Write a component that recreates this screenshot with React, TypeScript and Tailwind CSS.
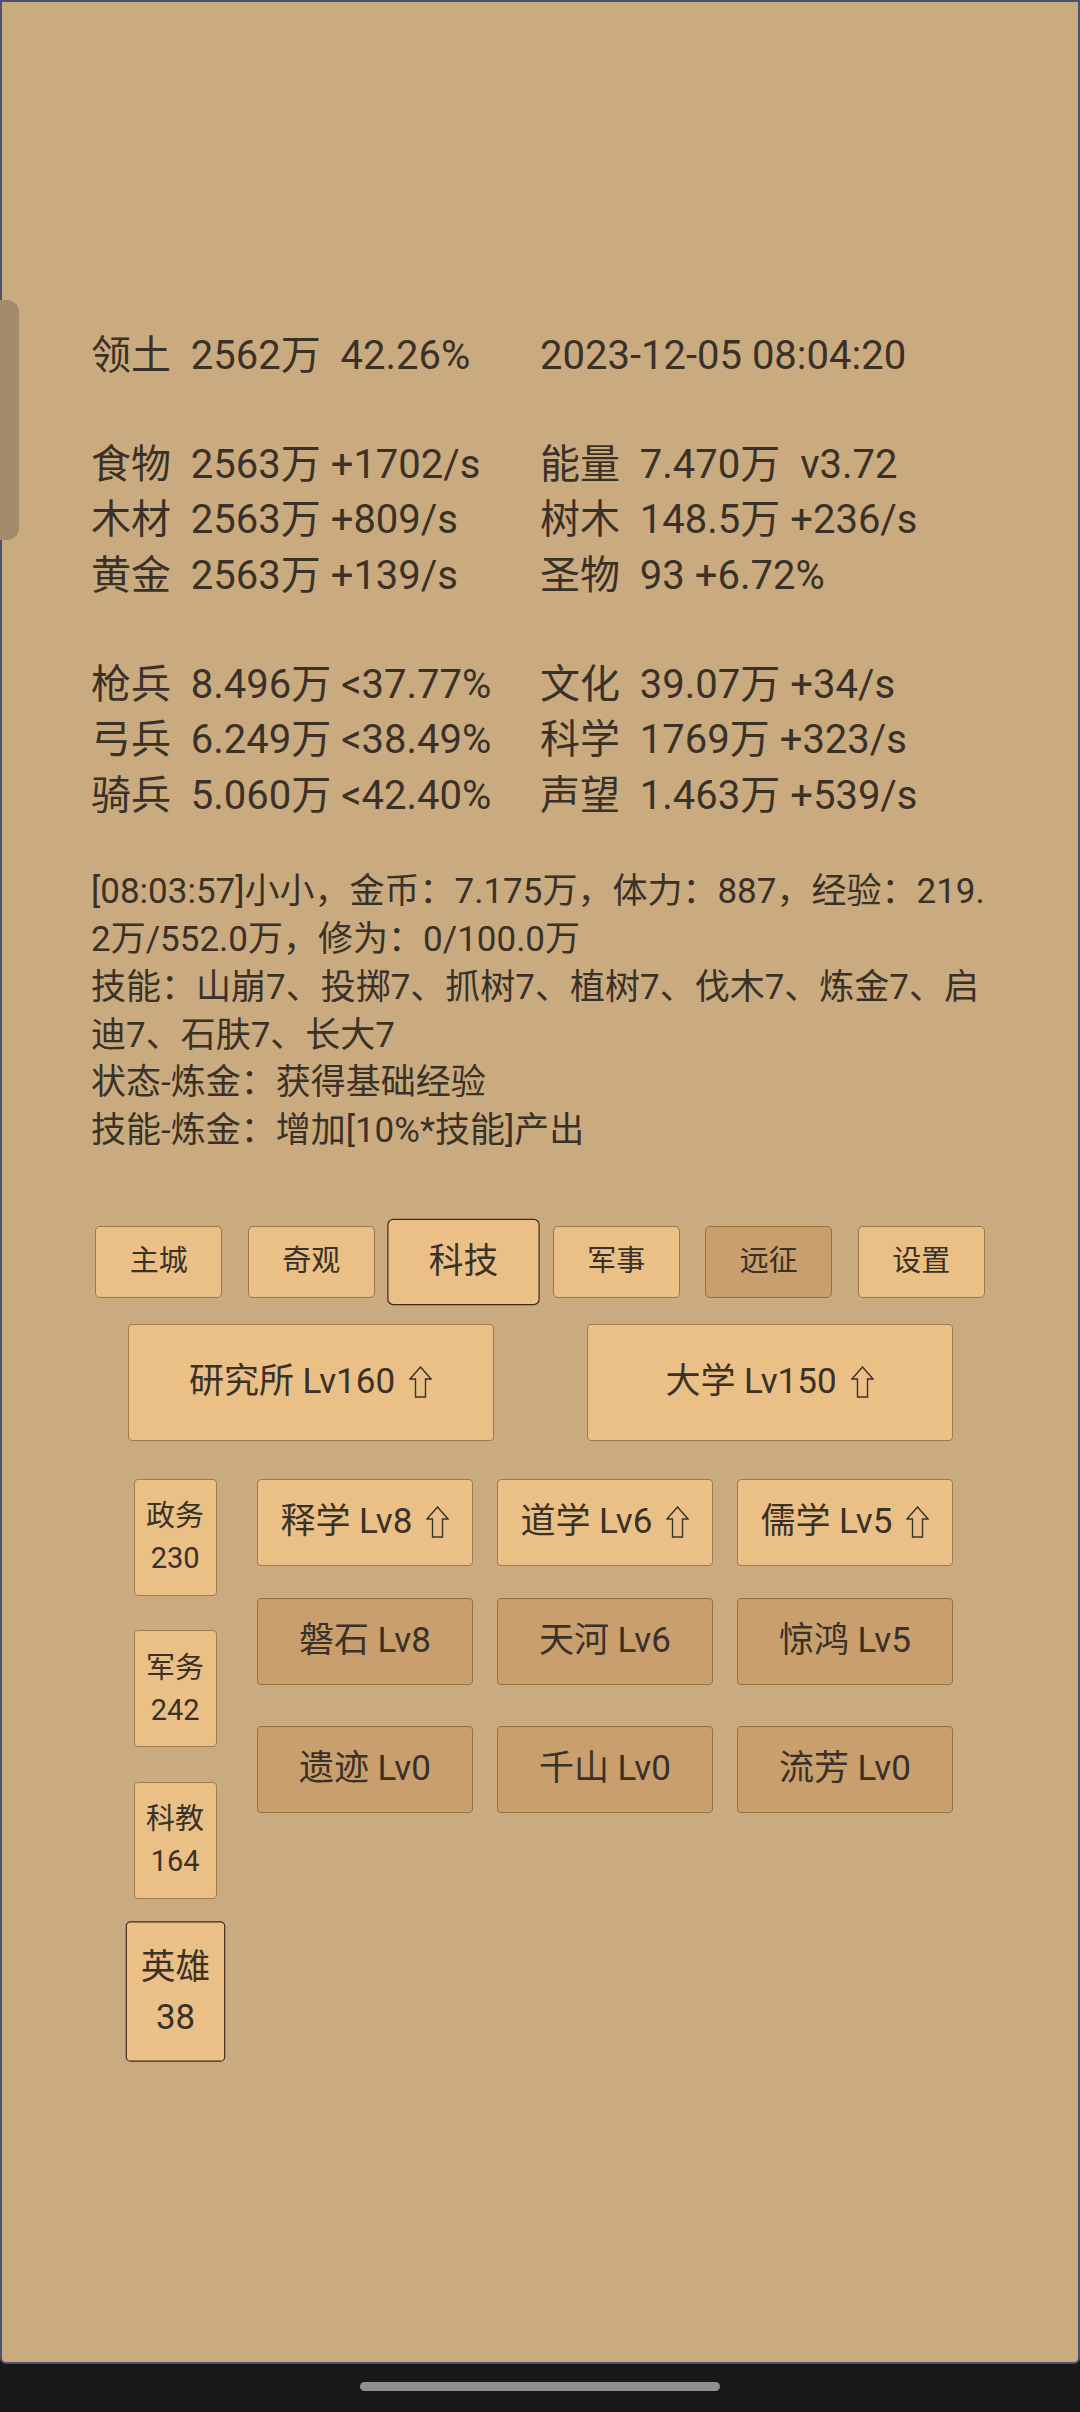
import React from "react";

const Arrow = () => (
  <svg width="23" height="32" viewBox="0 0 23 32" className="ml-[14px] shrink-0">
    <path
      d="M11.5 1 L22 13 L16.5 13 L16.5 31 L6.5 31 L6.5 13 L1 13 Z"
      fill="none"
      stroke="#3a3128"
      strokeWidth="1.4"
    />
  </svg>
);

const statGroups: [string, string][][] = [
  [["领土  2562万  42.26%", "2023-12-05 08:04:20"]],
  [
    ["食物  2563万 +1702/s", "能量  7.470万  v3.72"],
    ["木材  2563万 +809/s", "树木  148.5万 +236/s"],
    ["黄金  2563万 +139/s", "圣物  93 +6.72%"],
  ],
  [
    ["枪兵  8.496万 <37.77%", "文化  39.07万 +34/s"],
    ["弓兵  6.249万 <38.49%", "科学  1769万 +323/s"],
    ["骑兵  5.060万 <42.40%", "声望  1.463万 +539/s"],
  ],
];

const logLines = [
  "[08:03:57]小小，金币：7.175万，体力：887，经验：219.",
  "2万/552.0万，修为：0/100.0万",
  "技能：山崩7、投掷7、抓树7、植树7、伐木7、炼金7、启",
  "迪7、石肤7、长大7",
  "状态-炼金：获得基础经验",
  "技能-炼金：增加[10%*技能]产出",
];

const tabs = [
  { t: "主城", sel: false, dark: false },
  { t: "奇观", sel: false, dark: false },
  { t: "科技", sel: true, dark: false },
  { t: "军事", sel: false, dark: false },
  { t: "远征", sel: false, dark: true },
  { t: "设置", sel: false, dark: false },
];

const side = [
  { a: "政务", b: "230", sel: false },
  { a: "军务", b: "242", sel: false },
  { a: "科教", b: "164", sel: false },
  { a: "英雄", b: "38", sel: true },
];

const lightBtn = "border-[#a07c4c] bg-[#ebc086]";
const darkBtn = "border-[#94703f] bg-[#c99f6d]";

export default function App() {
  return (
    <div className="relative w-[1080px] h-[2412px] bg-[#181818] flex flex-col font-[Roboto,'Noto_Sans_CJK_SC',sans-serif] text-[#3a3128]">
      <div className="h-[2364px] w-full bg-[#caab80] border-2 border-[#4b5272] rounded-b-[6px] pt-[325.8px] flex flex-col">
        {/* stats */}
        <div className="px-[89px] text-[40px] leading-[55.4px]">
          {statGroups.map((g, gi) => (
            <div key={gi} className={gi > 0 ? "mt-[53.8px]" : ""}>
              {g.map(([l, r], ri) => (
                <div key={ri} className="grid grid-cols-[449px_1fr] whitespace-pre">
                  <div>{l}</div>
                  <div>{r}</div>
                </div>
              ))}
            </div>
          ))}
        </div>

        {/* log */}
        <div className="px-[89px] mt-[45.2px] text-[35px] leading-[47.7px]">
          {logLines.map((l, i) => (
            <div key={i} className="whitespace-nowrap">
              {l}
            </div>
          ))}
        </div>

        {/* tabs */}
        <div className="mt-[71.4px] flex justify-center">
          {tabs.map((b) => (
            <div
              key={b.t}
              className={
                "mx-[12.75px] w-[127px] h-[72px] rounded-[5px] flex items-center justify-center text-[29px] border " +
                (b.sel
                  ? "scale-[1.2] border-[#3d2b17] bg-[#ebc086]"
                  : b.dark
                  ? "border-[#94703f] bg-[#c99f6d]"
                  : "border-[#9b7849] bg-[#ebc086]")
              }
            >
              {b.t}
            </div>
          ))}
        </div>

        {/* buildings */}
        <div className="mt-[25.7px] flex justify-center gap-[93px]">
          {["研究所 Lv160", "大学 Lv150"].map((t) => (
            <div
              key={t}
              className={
                "w-[366px] h-[117px] rounded-[4px] border flex items-center justify-center text-[35px] whitespace-pre " +
                lightBtn
              }
            >
              <span>{t}</span>
              <Arrow />
            </div>
          ))}
        </div>

        {/* side + grid */}
        <div className="mt-[38px] flex items-start pl-[131.6px]">
          <div className="flex flex-col w-[83px] gap-[34.5px] items-center">
            {side.map((s) => (
              <div
                key={s.a}
                className={
                  "w-[83px] h-[117px] rounded-[4px] border bg-[#ebc086] flex flex-col items-center justify-center text-[29px] leading-[42px] " +
                  (s.sel ? "scale-[1.2] border-[#3d2b17]" : "border-[#a07c4c]")
                }
              >
                <div>{s.a}</div>
                <div>{s.b}</div>
              </div>
            ))}
          </div>
          <div className="ml-[40.3px] flex flex-col">
            <div className="flex gap-[24px]">
              {["释学 Lv8", "道学 Lv6", "儒学 Lv5"].map((t) => (
                <div
                  key={t}
                  className={
                    "w-[216px] h-[87px] rounded-[4px] border flex items-center justify-center text-[35px] whitespace-pre " +
                    lightBtn
                  }
                >
                  <span>{t}</span>
                  <Arrow />
                </div>
              ))}
            </div>
            <div className="mt-[32px] flex gap-[24px]">
              {["磐石 Lv8", "天河 Lv6", "惊鸿 Lv5"].map((t) => (
                <div
                  key={t}
                  className={
                    "w-[216px] h-[87px] rounded-[4px] border flex items-center justify-center text-[35px] whitespace-pre " +
                    darkBtn
                  }
                >
                  {t}
                </div>
              ))}
            </div>
            <div className="mt-[41.4px] flex gap-[24px]">
              {["遗迹 Lv0", "千山 Lv0", "流芳 Lv0"].map((t) => (
                <div
                  key={t}
                  className={
                    "w-[216px] h-[87px] rounded-[4px] border flex items-center justify-center text-[35px] whitespace-pre " +
                    darkBtn
                  }
                >
                  {t}
                </div>
              ))}
            </div>
          </div>
        </div>
      </div>

      {/* side drawer handle (overlays the frame edge) */}
      <div className="absolute left-0 top-[300px] w-[19px] h-[240px] rounded-r-[12px] bg-[#a28c6c]" />

      {/* nav bar */}
      <div className="flex-1 flex justify-center">
        <div className="mt-[18px] w-[360px] h-[9px] rounded-full bg-[#8f8f8f]" />
      </div>
    </div>
  );
}
